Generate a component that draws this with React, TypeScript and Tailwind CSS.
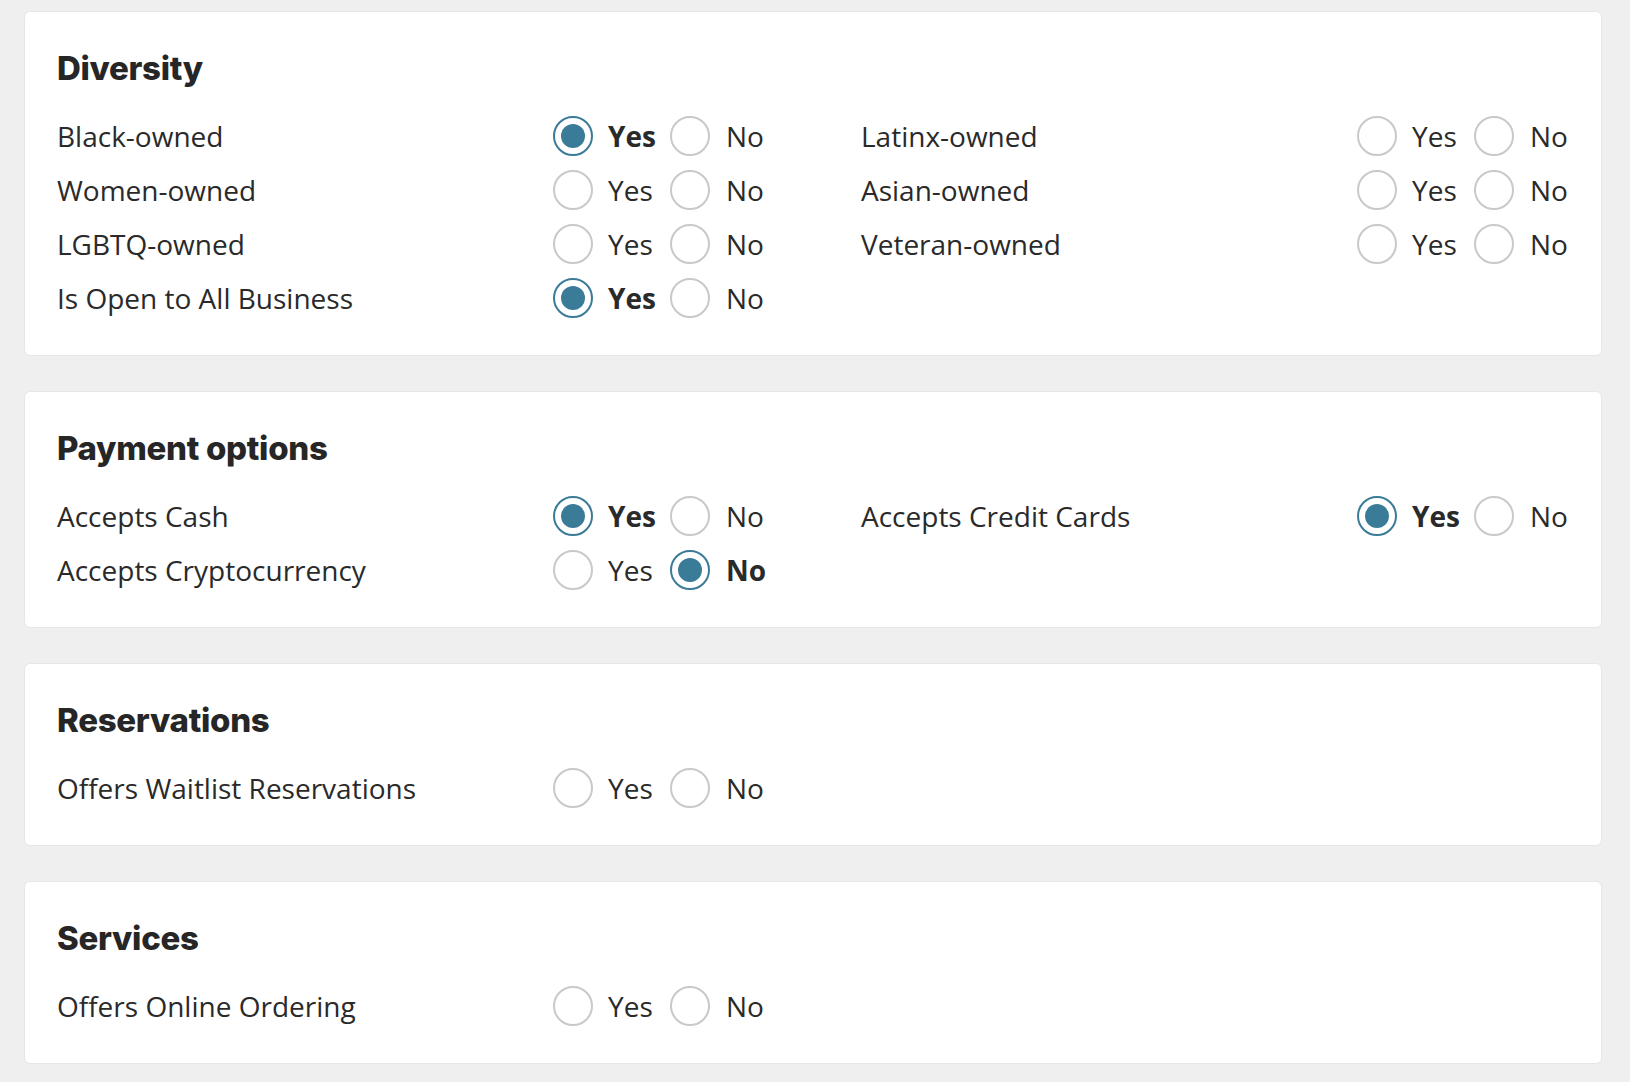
import React from "react";

type Row = { label: string; value: "yes" | "no" | null };
type Section = { title: string; left: Row[]; right: Row[] };

const sections: Section[] = [
  {
    title: "Diversity",
    left: [
      { label: "Black-owned", value: "yes" },
      { label: "Women-owned", value: null },
      { label: "LGBTQ-owned", value: null },
      { label: "Is Open to All Business", value: "yes" },
    ],
    right: [
      { label: "Latinx-owned", value: null },
      { label: "Asian-owned", value: null },
      { label: "Veteran-owned", value: null },
    ],
  },
  {
    title: "Payment options",
    left: [
      { label: "Accepts Cash", value: "yes" },
      { label: "Accepts Cryptocurrency", value: "no" },
    ],
    right: [{ label: "Accepts Credit Cards", value: "yes" }],
  },
  {
    title: "Reservations",
    left: [{ label: "Offers Waitlist Reservations", value: null }],
    right: [],
  },
  {
    title: "Services",
    left: [{ label: "Offers Online Ordering", value: null }],
    right: [],
  },
];

function Radio({ checked }: { checked: boolean }) {
  return checked ? (
    <span className="flex h-[40px] w-[40px] shrink-0 items-center justify-center rounded-full border-[2.5px] border-[#3a7b98] bg-white">
      <span className="block h-[24px] w-[24px] rounded-full bg-[#3a7b98]" />
    </span>
  ) : (
    <span className="block h-[40px] w-[40px] shrink-0 rounded-full border-2 border-[#c9c9c9] bg-white" />
  );
}

function RowItem({ row }: { row: Row }) {
  return (
    <div className="flex h-[40px] items-center">
      <div className="w-[496px] shrink-0 leading-[40px]">{row.label}</div>
      <div className="flex items-center">
        <Radio checked={row.value === "yes"} />
        <span
          className={
            "ml-[15px] w-[47px] leading-[40px] " +
            (row.value === "yes" ? "font-bold" : "font-normal")
          }
        >
          Yes
        </span>
        <span className="ml-[15px] flex">
          <Radio checked={row.value === "no"} />
        </span>
        <span
          className={
            "ml-[16px] leading-[40px] " +
            (row.value === "no" ? "font-bold" : "font-normal")
          }
        >
          No
        </span>
      </div>
    </div>
  );
}

export default function App() {
  return (
    <div
      className="min-h-[1082px] bg-[#efefef] pt-[12px] pl-[25px] pr-[29px] pb-[20px] text-[28px] text-[#2a2a2a]"
      style={{ fontFamily: '"Open Sans", "Noto Sans", sans-serif' }}
    >
      <div className="flex flex-col gap-[37px]">
        {sections.map((s) => (
          <section
            key={s.title}
            className="rounded-[5px] bg-white px-8 pt-9 pb-[37px] shadow-[0_0_0_1px_#e7e7e7]"
          >
            <h2
              className="mb-[28px] text-[33px] font-extrabold leading-[40px] tracking-[-0.3px] text-[#262626]"
              style={{ fontFamily: "Inter, sans-serif" }}
            >
              {s.title}
            </h2>
            <div className="grid grid-cols-2 gap-x-24">
              <div className="flex flex-col gap-[14px]">
                {s.left.map((r) => (
                  <RowItem key={r.label} row={r} />
                ))}
              </div>
              <div className="flex flex-col gap-[14px]">
                {s.right.map((r) => (
                  <RowItem key={r.label} row={r} />
                ))}
              </div>
            </div>
          </section>
        ))}
      </div>
    </div>
  );
}
